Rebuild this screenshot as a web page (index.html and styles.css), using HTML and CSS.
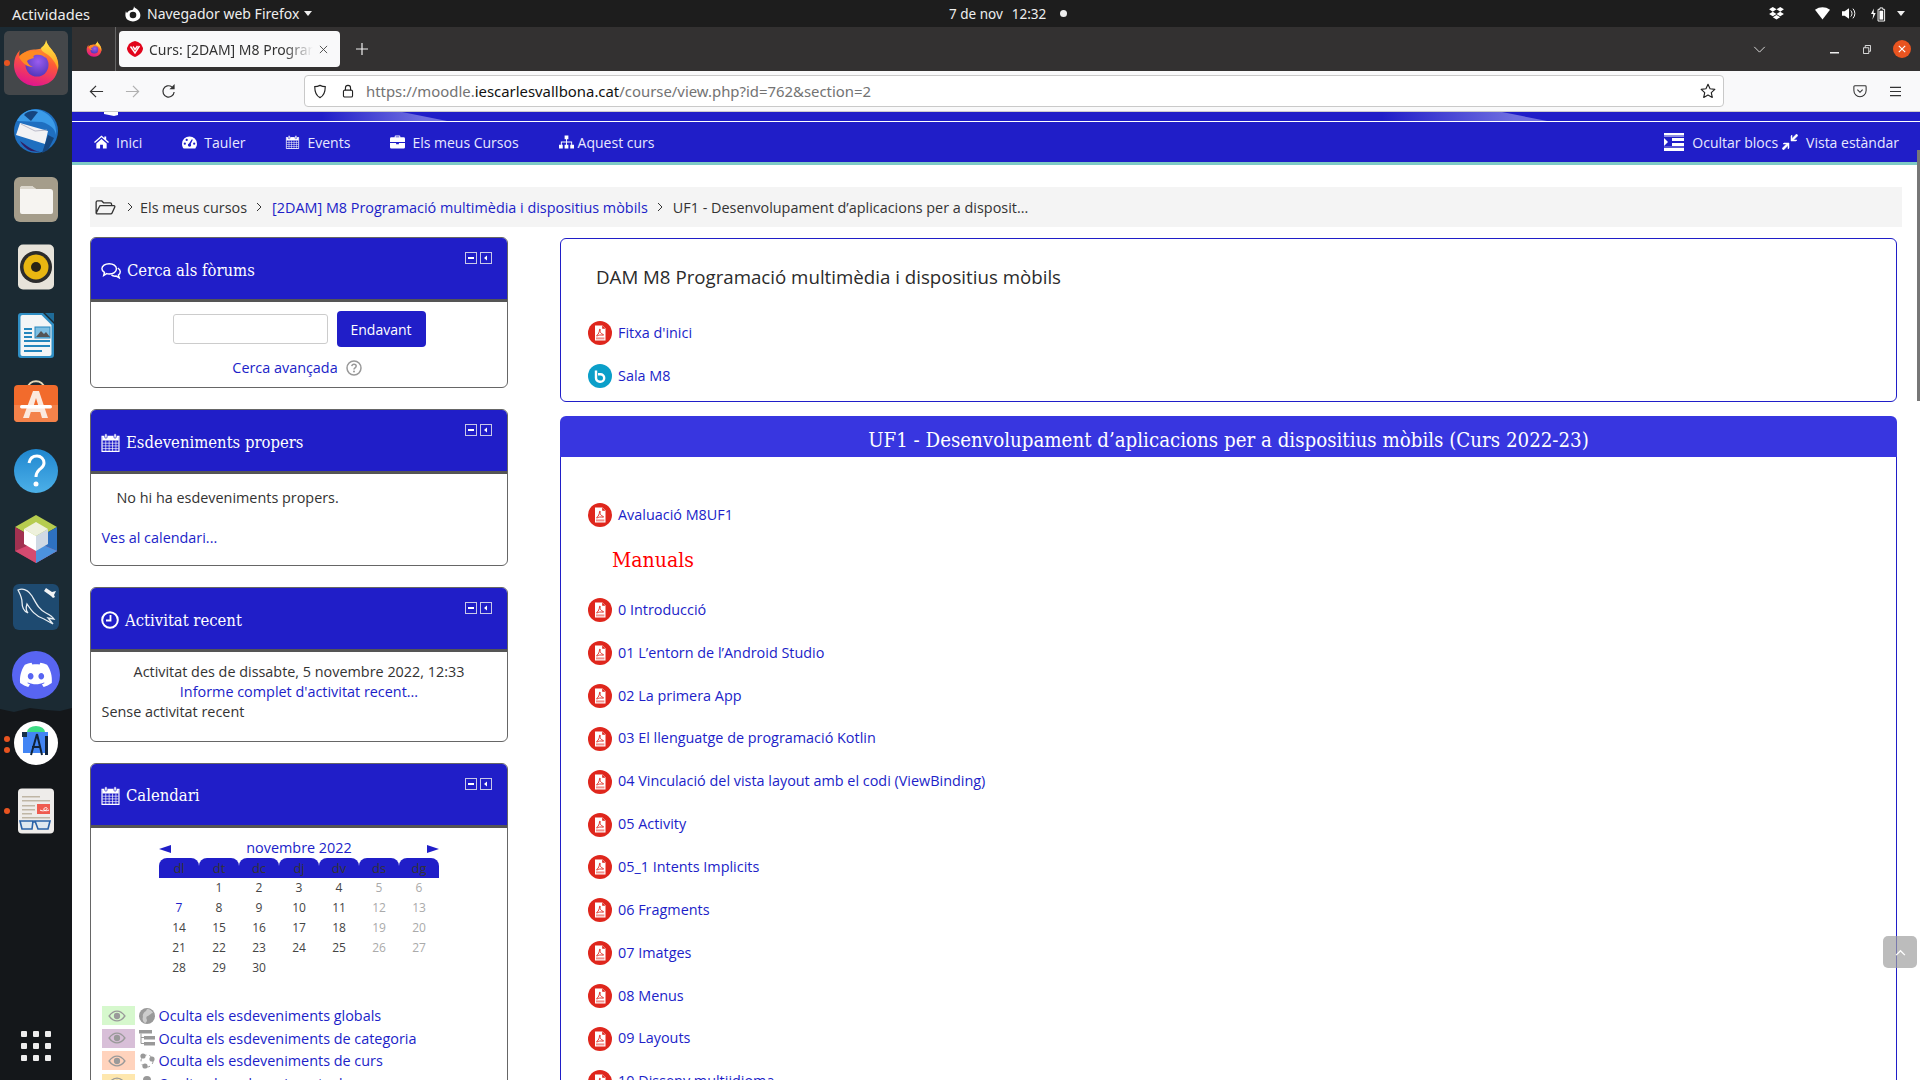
FILE: index.html
```html
<!DOCTYPE html>
<html lang="ca">
<head>
<meta charset="utf-8">
<title>Curs: [2DAM] M8 Programació</title>
<link rel="stylesheet" href="styles.css">
</head>
<body>
<svg class="defs" aria-hidden="true">
  <defs>
    <linearGradient id="ffBody" x1="0.7" y1="0" x2="0.4" y2="1"><stop offset="0" stop-color="#ffb52b"/><stop offset="0.45" stop-color="#ff5a36"/><stop offset="1" stop-color="#e0148f"/></linearGradient>
    <linearGradient id="ffFlame" x1="0.5" y1="0" x2="0.5" y2="1"><stop offset="0" stop-color="#ffe84a"/><stop offset="1" stop-color="#ff9a1f"/></linearGradient>
    <radialGradient id="ffGlobe" cx="0.55" cy="0.35" r="0.7"><stop offset="0" stop-color="#9a5cf0"/><stop offset="1" stop-color="#4f35b8"/></radialGradient>
    <symbol id="i-ff" viewBox="0 0 48 48">
      <path d="M34 1c1 5 5 8 9 14 4 7 4 15 1 21-3 7-11 11-20 11C12 47 2 38 2 26 2 20 4 15 8 11c-1 3-1 5 0 7 2-4 6-6 10-7 5-1 11 0 13-3 2-2 3-5 3-7z" fill="url(#ffBody)"/>
      <path d="M34 1c1 5 5 8 9 14 3 5 4 11 3 16-2-7-6-13-13-17-2-1-4-3-4-5 2-2 5-4 5-8z" fill="url(#ffFlame)"/>
      <circle cx="25" cy="26" r="11.5" fill="url(#ffGlobe)"/>
      <path d="M7 18c3-5 9-6 15-6 5 0 10 3 12 7-3-3-7-4-11-3-2 1-2 2-1 3-3 1-5 1-7 3 1 3 3 5 6 6-6 0-11-4-14-10z" fill="#ff8a22"/>
    </symbol>
    <symbol id="i-pdf" viewBox="0 0 24 24">
      <circle cx="12" cy="12" r="12" fill="#df261c"/>
      <path d="M7 4.500h7.500L17.500 7.500V19.500H7z" fill="#fff"/>
      <path d="M14.200 4.500v3.300h3.300z" fill="#df261c"/>
      <path d="M8.800 14.400c1.700-1.100 2.600-3.400 2.700-5.600 0-1.400 1-.9.600.4-.3 1.700.9 3.600 2.900 4.200 1 .3.700 1-.3.800-2.200-.5-4.300-.1-5.500.7-.6.300-.9 0-.4-.5z" fill="none" stroke="#df261c" stroke-width="0.900"/>
      <rect x="8" y="16.400" width="8.400" height="2" fill="#f1928c"/>
    </symbol>
    <symbol id="i-bbb" viewBox="0 0 24 24">
      <circle cx="12" cy="12" r="12" fill="#0b9fc9"/>
      <path d="M8 6.500v7.500a3.800 3.800 0 0 0 3.800 3.800h.6a3.800 3.800 0 0 0 0-7.600H10" fill="none" stroke="#fff" stroke-width="2.400"/>
    </symbol>
    <symbol id="i-cal" viewBox="0 0 28 28">
      <path d="M1.500 5h25v22h-25z" fill="none" stroke="#fff" stroke-width="1.700"/>
      <path d="M2 5h24v6H2z" fill="#fff"/>
      <path d="M2 15h24M2 19h24M2 23h24M7 11v16M12 11v16M17 11v16M22 11v16" stroke="#fff" stroke-width="1"/>
      <rect x="5.500" y="1" width="3.500" height="6.500" rx="1.500" fill="#fff" stroke="#201ec8"/>
      <rect x="19" y="1" width="3.500" height="6.500" rx="1.500" fill="#fff" stroke="#201ec8"/>
    </symbol>
    <symbol id="i-eye" viewBox="0 0 24 16">
      <path d="M1.500 8C5 3 8.500 1.500 12 1.500S19 3 22.500 8C19 13 15.500 14.500 12 14.500S5 13 1.500 8z" fill="none" stroke="#9a9a9a" stroke-width="1.800"/>
      <circle cx="12" cy="8" r="4.200" fill="#9a9a9a"/>
    </symbol>
    <symbol id="i-min" viewBox="0 0 12 12"><rect x=".5" y=".5" width="11" height="11" fill="none" stroke="#c8c8e8"/><rect x="3" y="5" width="6" height="2" fill="#fff"/></symbol>
    <symbol id="i-dock" viewBox="0 0 12 12"><rect x=".5" y=".5" width="11" height="11" fill="none" stroke="#c8c8e8"/><path d="M7 3.500 4 6l3 2.500z" fill="#fff"/></symbol>
  </defs>
</svg>

<header class="topbar">
  <div class="top-left">
    <span class="activities">Actividades</span>
    <svg class="app-glyph" viewBox="0 0 16 16"><path d="M9 0c0 2 2 2 4 4 3 3 3 7 1 9-3 3-8 3-11 1C0 12 0 8 1 5c0 1 1 2 1 2 1-2 3-3 5-3 1 0 2-2 2-4z" fill="#fff"/><circle cx="8" cy="9" r="3.300" fill="#1d1d1d"/></svg>
    <span>Navegador web Firefox</span>
    <span class="caret"></span>
  </div>
  <div class="clock"><span>7 de nov</span><span>12:32</span><span class="clock-dot"></span></div>
  <div class="tray">
    <svg class="tray-drop" viewBox="0 0 16 14"><path d="M4 0 8 2.500 4 5 0 2.500zM12 0l4 2.500L12 5 8 2.500zM4 5l4 2.500L4 10 0 7.500zM12 5l4 2.500-4 2.500-4-2.500zM4 11l4-2.500 4 2.500-4 2.500z" fill="#fff"/></svg>
    <svg class="tray-wifi" viewBox="0 0 16 13"><path d="M0 2.500C5-1 11-1 16 2.500L8 13z" fill="#fff"/></svg>
    <svg class="tray-vol" viewBox="0 0 16 14"><path d="M0 4.500h3L8 1v12L3 9.500H0z" fill="#fff"/><path d="M10 3.500a5 5 0 0 1 0 7M12.500 1.500a8 8 0 0 1 0 11" fill="none" stroke="#fff" stroke-width="1.100"/></svg>
    <svg class="tray-bat" viewBox="0 0 16 16"><path d="M3 2 0 8h2.500L1.500 14 5 7H2.800z" fill="#fff"/><path d="M9.500 1.500h3V3h2v12.500h-7V3h2z" fill="none" stroke="#fff"/><rect x="9" y="4.500" width="4" height="9.500" fill="#fff"/></svg>
    <span class="caret tray-caret"></span>
  </div>
</header>

<div class="desktop">
  <nav class="dock">
    <svg class="dock-wave" viewBox="0 0 72 6" preserveAspectRatio="none"><path d="M0 0h72v1L60 4 46 3 30 1 14 5 0 2z" fill="#1b2a33"/></svg>
    <div class="dock-item is-active">
      <span class="run-dot"></span>
      <svg class="dock-icon" viewBox="0 0 48 48"><use href="#i-ff"/></svg>
    </div>
    <div class="dock-item">
      <svg class="dock-icon" viewBox="0 0 48 48">
        <circle cx="24" cy="24" r="22" fill="#1f6fc0"/>
        <path d="M5 14C9 5 20 0 30 4c9 4 15 12 14 24-1-7-7-11-14-13z" fill="#3b9be8"/>
        <path d="M12 8c3-4 9-5 14-3l-7 9z" fill="#15457f"/>
        <path d="M8 16 36 24l-3 13L4 28z" fill="#f2f2f4"/>
        <path d="M9 17l14 7 12-1" fill="none" stroke="#aab" stroke-width=".8"/>
        <path d="M8 34c7 5 12 9 20 11l-9-1C14 42 10 38 8 34z" fill="#311f63"/>
        <path d="M36 28l6 3-6 12-6 3z" fill="#15457f"/>
      </svg>
    </div>
    <div class="dock-item">
      <svg class="dock-icon" viewBox="0 0 48 48">
        <rect x="2" y="2" width="44" height="45" rx="6" fill="#a59d8b"/>
        <path d="M8 14a3 3 0 0 1 3-3h9l4 3h14a3 3 0 0 1 3 3v20a2 2 0 0 1-2 2H10a2 2 0 0 1-2-2z" fill="#f6f4f1"/>
        <path d="M8 14a3 3 0 0 1 3-3h9l4 3z" fill="#dcd7cd"/>
      </svg>
    </div>
    <div class="dock-item">
      <svg class="dock-icon" viewBox="0 0 48 48">
        <rect x="6" y="1.500" width="36" height="45" rx="5" fill="#e7e3da"/>
        <circle cx="24" cy="24" r="16" fill="#2c2c2c"/>
        <circle cx="24" cy="24" r="12.500" fill="#e9b611"/>
        <circle cx="24" cy="24" r="5" fill="#2b2415"/>
      </svg>
    </div>
    <div class="dock-item">
      <svg class="dock-icon" viewBox="0 0 48 48">
        <path d="M6 5a3 3 0 0 1 3-3h22l11 11v31a3 3 0 0 1-3 3H9a3 3 0 0 1-3-3z" fill="#2f8ec4"/>
        <path d="M8.500 6a2 2 0 0 1 2-2h19l10 10v29a2 2 0 0 1-2 2h-27a2 2 0 0 1-2-2z" fill="#f3f5f6"/>
        <path d="M33 2h9v9z" fill="#1f6b98"/>
        <path d="M12 17h8v2h-8zM12 21h8v2h-8zM12 25h8v2h-8zM12 29h26v2H12zM12 34h26v2H12zM12 39h18v2H12z" fill="#2486bd"/>
        <rect x="23" y="16" width="15" height="11" fill="#7fbfe2" stroke="#2486bd"/>
        <path d="M24 26l5-6 3 3 2-2 4 5z" fill="#555"/>
      </svg>
    </div>
    <div class="dock-item">
      <svg class="dock-icon" viewBox="0 0 48 48">
        <path d="M16 9c0-9 16-9 16 0" fill="none" stroke="#e4d8b8" stroke-width="2"/>
        <rect x="2" y="6" width="44" height="37" rx="4" fill="#f26b2c"/>
        <path d="M2 26h44v13a4 4 0 0 1-4 4H6a4 4 0 0 1-4-4z" fill="#f4824a"/>
        <path d="M21 12h6l9 27h-6l-1.800-6H18.800L17 39h-6zM24 19l-3 10h6z" fill="#fbe9de"/>
        <rect x="8" y="26" width="32" height="3.500" rx="1.700" fill="#fff"/>
      </svg>
    </div>
    <div class="dock-item">
      <svg class="dock-icon" viewBox="0 0 48 48">
        <defs><linearGradient id="helpG" x1="0" y1="0" x2="0" y2="1"><stop offset="0" stop-color="#1f86cf"/><stop offset="1" stop-color="#4cb0e8"/></linearGradient></defs>
        <circle cx="24" cy="24" r="22" fill="url(#helpG)"/>
        <path d="M17 16c1-5 4-7 8-7 4 0 7 3 7 7s-3 5-5 7-3 3-3 7" fill="none" stroke="#fff" stroke-width="3"/>
        <circle cx="24" cy="37" r="2.500" fill="#fff"/>
      </svg>
    </div>
    <div class="dock-item">
      <svg class="dock-icon" viewBox="0 0 48 48">
        <path d="M24 0 45 12 24 24 3 12z" fill="#b6cc4f"/>
        <path d="M3 12 24 24v24L3 36z" fill="#a23150"/>
        <path d="M45 12 24 24v24l21-12z" fill="#2e71c0"/>
        <path d="M3 36l21-9 21 9-21 12z" fill="#d54a70"/>
        <path d="M24 27l21 9-21 12z" fill="#4c92de"/>
        <path d="M24 7 36 14 24 21 12 14z" fill="#eef1dc"/>
        <path d="M12 14l12 7v15l-12-7z" fill="#fff"/>
        <path d="M36 14l-12 7v15l12-7z" fill="#cfd9e4"/>
      </svg>
    </div>
    <div class="dock-item">
      <svg class="dock-icon" viewBox="0 0 48 48">
        <rect x="1" y="1" width="46" height="46" rx="6" fill="#1e4a70"/>
        <path d="M6 7c5-2 10 0 14 6 4 7 7 14 14 17 4 2 6 3 8 6l-6-1 5 6-9-5c-9-3-13-9-17-15-1 3-2 6 1 9-5-2-6-7-6-11 0-5-2-8-4-12z" fill="none" stroke="#e8eef2" stroke-width="1.300"/>
        <path d="M34 5l6 4 4-1-2 4 1 2-2 1-2-2-7-5z" fill="#f2f4f6"/>
      </svg>
    </div>
    <div class="dock-item">
      <svg class="dock-icon" viewBox="0 0 48 48">
        <circle cx="24" cy="24" r="24" fill="#5865f2"/>
        <g transform="translate(8 8) scale(1.330)"><path fill="#fff" d="M20.317 4.3698a19.7913 19.7913 0 00-4.8851-1.5152.0741.0741 0 00-.0785.0371c-.211.3753-.4447.8648-.6083 1.2495-1.8447-.2762-3.68-.2762-5.4868 0-.1636-.3933-.4058-.8742-.6177-1.2495a.077.077 0 00-.0785-.037 19.7363 19.7363 0 00-4.8852 1.515.0699.0699 0 00-.0321.0277C.5334 9.0458-.319 13.5799.0992 18.0578a.0824.0824 0 00.0312.0561c2.0528 1.5076 4.0413 2.4228 5.9929 3.0294a.0777.0777 0 00.0842-.0276c.4616-.6304.8731-1.2952 1.226-1.9942a.076.076 0 00-.0416-.1057c-.6528-.2476-1.2743-.5495-1.8722-.8923a.077.077 0 01-.0076-.1277c.1258-.0943.2517-.1923.3718-.2914a.0743.0743 0 01.0776-.0105c3.9278 1.7933 8.18 1.7933 12.0614 0a.0739.0739 0 01.0785.0095c.1202.099.246.1981.3728.2924a.077.077 0 01-.0066.1276 12.2986 12.2986 0 01-1.873.8914.0766.0766 0 00-.0407.1067c.3604.698.7719 1.3628 1.225 1.9932a.076.076 0 00.0842.0286c1.961-.6067 3.9495-1.5219 6.0023-3.0294a.077.077 0 00.0313-.0552c.5004-5.177-.8382-9.6739-3.5485-13.6604a.061.061 0 00-.0312-.0286zM8.02 15.3312c-1.1825 0-2.1569-1.0857-2.1569-2.419 0-1.3332.9555-2.4189 2.157-2.4189 1.2108 0 2.1757 1.0952 2.1568 2.419 0 1.3332-.9555 2.4189-2.1569 2.4189zm7.9748 0c-1.1825 0-2.1569-1.0857-2.1569-2.419 0-1.3332.9554-2.4189 2.1569-2.4189 1.2108 0 2.1757 1.0952 2.1568 2.419 0 1.3332-.946 2.4189-2.1568 2.4189Z"/></g>
      </svg>
    </div>
    <div class="dock-item">
      <span class="run-dot run-dot-a"></span><span class="run-dot run-dot-b"></span>
      <svg class="dock-icon" viewBox="0 0 48 48">
        <circle cx="24" cy="24" r="22" fill="#fff"/>
        <path d="M15 13a9 6 0 0 1 18 0z" fill="#3ddc84"/>
        <path d="M11 13h25v21H11z" fill="#4285f4"/>
        <rect x="10" y="13" width="5" height="5" fill="#16304a"/>
        <path d="M25 15l-6 21M25 15l5 21M20 28h9" stroke="#10233a" stroke-width="2" fill="none"/>
        <rect x="33" y="17" width="3" height="19" fill="#10233a"/>
      </svg>
    </div>
    <div class="dock-item">
      <span class="run-dot"></span>
      <svg class="dock-icon" viewBox="0 0 48 48">
        <rect x="6" y="1.500" width="36" height="45" rx="4" fill="#eeecea"/>
        <path d="M10 9h18v1.500H10zM10 13h28v1.500H10zM10 18h13v1.500H10zM10 22h13v1.500H10zM10 26h10v1.500H10zM10 30h28v1.500H10z" fill="#bfb6a5"/>
        <rect x="25" y="17" width="13" height="10" fill="#ef5b4f"/>
        <path d="M28 23c3 2 8 0 7-2-1-1-4 0-3 2 1 1 3 1 5 0" fill="none" stroke="#fff"/>
        <path d="M8 34h13l-1 8h-10zM23 34h15l-2 8h-10zM21 35h2" fill="#dfe8f0" stroke="#2a62a8" stroke-width="1.600"/>
      </svg>
    </div>
    <div class="app-grid">
      <i></i><i></i><i></i><i></i><i></i><i></i><i></i><i></i><i></i>
    </div>
  </nav>

  <div class="window">
    <div class="tabbar">
      <div class="tab-pinned"><svg class="pinned-ff" viewBox="0 0 48 48"><use href="#i-ff"/></svg></div>
      <div class="tab">
        <svg class="tab-fav" viewBox="0 0 16 16"><path d="M8 0l3 1 3 2 2 4c0 4-3 7-8 9-5-2-8-5-8-9l2-4 3-2z" fill="#e2051c"/><path d="M3.500 5.500 8 12l4.500-7M6 5.500 8 8.500l2.500-3.500" fill="none" stroke="#fff" stroke-width="1.400"/></svg>
        <span class="tab-title">Curs: [2DAM] M8 Programació</span>
        <svg class="tab-x" viewBox="0 0 10 10"><path d="M1 1l8 8M9 1 1 9" stroke="#444" stroke-width="1"/></svg>
      </div>
      <svg class="tab-plus" viewBox="0 0 12 12"><path d="M6 0v12M0 6h12" stroke="#f0f0f0" stroke-width="1.200"/></svg>
      <div class="win-controls">
        <svg class="win-chevron" viewBox="0 0 14 8"><path d="M1 1l6 6 6-6" fill="none" stroke="#eee" stroke-width="1"/></svg>
        <svg class="win-min" viewBox="0 0 9 2"><rect width="9" height="1.500" fill="#eee"/></svg>
        <svg class="win-max" viewBox="0 0 9 10"><path d="M.5 3h6v6.500h-6zM2.500 2.800V.5h6v6.500H6.800" fill="none" stroke="#eee"/></svg>
        <span class="win-close"><svg viewBox="0 0 10 10"><path d="M1 1l8 8M9 1 1 9" stroke="#fff" stroke-width="1.400"/></svg></span>
      </div>
    </div>

    <div class="toolbar">
      <svg class="tb-icon" viewBox="0 0 16 16"><path d="M15 8H1.500M7.500 2 1.500 8l6 6" fill="none" stroke="#333" stroke-width="1.300"/></svg>
      <svg class="tb-icon tb-forward" viewBox="0 0 16 16"><path d="M1 8h13.500M8.500 2l6 6-6 6" fill="none" stroke="#b0b0b0" stroke-width="1.300"/></svg>
      <svg class="tb-icon tb-reload" viewBox="0 0 16 16"><path d="M14 8.500A6 6 0 1 1 11.500 3" fill="none" stroke="#333" stroke-width="1.300"/><path d="M14.500 0v5.500H9z" fill="#333"/></svg>
      <div class="urlbar">
        <svg class="url-shield" viewBox="0 0 16 16"><path d="M8 1c2 1 4 1.500 6 1.500 0 6-1 10-6 12.500-5-2.500-6-6.500-6-12.500C4 2.500 6 2 8 1z" fill="none" stroke="#222" stroke-width="1.300"/></svg>
        <svg class="url-lock" viewBox="0 0 14 16"><path d="M4 7V4.500a3 3 0 0 1 6 0V7" fill="none" stroke="#222" stroke-width="1.300"/><rect x="1.700" y="7" width="10.600" height="8" rx="1.500" fill="none" stroke="#222" stroke-width="1.300"/></svg>
        <span class="url-text">https://moodle.<b>iescarlesvallbona.cat</b>/course/view.php?id=762&amp;section=2</span>
        <svg class="url-star" viewBox="0 0 18 18"><path d="M9 1.500l2.300 5 5.400.6-4 3.700 1.100 5.400L9 13.500l-4.800 2.700 1.100-5.400-4-3.700 5.400-.6z" fill="none" stroke="#222" stroke-width="1.300" stroke-linejoin="round"/></svg>
      </div>
      <svg class="tb-pocket" viewBox="0 0 16 16"><path d="M2 2h12a1 1 0 0 1 1 1v4.500a7 7 0 0 1-14 0V3a1 1 0 0 1 1-1z" fill="none" stroke="#333" stroke-width="1.200"/><path d="M5 6.500 8 9.500l3-3" fill="none" stroke="#333" stroke-width="1.300"/></svg>
      <svg class="tb-menu" viewBox="0 0 14 12"><path d="M1 1.500h12M1 6h12M1 10.500h12" stroke="#333" stroke-width="1.200"/></svg>
    </div>

    <main class="page">
      <div class="site-strip">
        <svg class="strip-art" viewBox="0 0 1848 9" preserveAspectRatio="none">
          <defs>
            <linearGradient id="stripA" x1="0" y1="0" x2="1" y2="0"><stop offset="0" stop-color="#201ec8"/><stop offset="0.8" stop-color="#6f6ee0"/><stop offset="1" stop-color="#6f6ee0"/></linearGradient>
          </defs>
          <path d="M1310 0h120l45 9h-165z" fill="url(#stripA)"/>
          <path d="M250 0h80l45 9h-125z" fill="url(#stripA)"/>
          <path d="M32 0h14v3l-4 1-10-2z" fill="#fff"/>
        </svg>
      </div>
      <div class="site-nav">
        <a class="nav-item"><svg class="nav-icon" viewBox="0 0 16 14"><path d="M8 0 0 7l1 1 7-6 7 6 1-1-3-2.600V1h-2v1.700zM2.500 8.500V14h4v-4h3v4h4V8.500L8 3.800z" fill="#fff"/></svg>Inici</a>
        <a class="nav-item"><svg class="nav-icon" viewBox="0 0 16 14"><path d="M8 1a8 8 0 0 0-8 8c0 2 .7 3.700 1.800 5h12.400A8 8 0 0 0 16 9a8 8 0 0 0-8-8zM3 10a1.200 1.200 0 1 1 0-2.400A1.200 1.200 0 0 1 3 10zm2-4a1.200 1.200 0 1 1 0-2.400A1.200 1.200 0 0 1 5 6zm3 6a1.800 1.800 0 0 1-.5-3.500L10.500 4l1 .5L9.300 9A1.800 1.800 0 0 1 8 12zm5-2a1.200 1.200 0 1 1 0-2.400 1.200 1.200 0 0 1 0 2.400z" fill="#fff"/></svg>Tauler</a>
        <a class="nav-item"><svg class="nav-icon" viewBox="0 0 28 28"><use href="#i-cal"/></svg>Events</a>
        <a class="nav-item"><svg class="nav-icon" viewBox="0 0 16 14"><path d="M5 2V1a1 1 0 0 1 1-1h4a1 1 0 0 1 1 1v1h3.500A1.500 1.500 0 0 1 16 3.500V7H0V3.500A1.500 1.500 0 0 1 1.500 2zm1 0h4V1H6zM0 8h6.500v1.500h3V8H16v4.500a1.500 1.500 0 0 1-1.500 1.500h-13A1.500 1.500 0 0 1 0 12.500z" fill="#fff"/></svg>Els meus Cursos</a>
        <a class="nav-item nav-narrow"><svg class="nav-icon" viewBox="0 0 16 14"><path d="M6 0h4v4H8.500v2.500H14V10h2v4h-4v-4h1V7.500H8.500V10H10v4H6v-4h1.500V7.500H3V10h1v4H0v-4h2V6.500h5.500V4H6z" fill="#fff"/></svg>Aquest curs</a>
        <div class="nav-right">
          <a class="nav-item nav-blocks"><svg class="nav-icon-lg" viewBox="0 0 20 18"><path d="M0 0h20v2.500H0zM0 15h20v3H0zM8 5h12v3H8zM8 10h12v3H8zM0 5l4 4-4 4z" fill="#fff"/><path d="M0 3.500h20M0 14h20" stroke="#fff" stroke-width=".5"/></svg>Ocultar blocs</a>
          <a class="nav-item nav-view"><svg class="nav-icon" viewBox="0 0 16 16"><path d="M16 1.500 11.500 6H15l-1 1H9V2l1-1v3.500L14.500 0zM0 14.500 4.500 10H1l1-1h5v5l-1 1v-3.500L1.500 16z" fill="#fff" stroke="#fff" stroke-width=".5"/></svg>Vista estàndar</a>
        </div>
      </div>
      <div class="nav-rule"></div>

      <div class="content">
        <div class="breadcrumb">
          <svg class="crumb-home" viewBox="0 0 22 16"><path d="M1 14V2.500A1.500 1.500 0 0 1 2.500 1H7l2 2h7a1.500 1.500 0 0 1 1.500 1.500V6M1 14l3.500-7a1.500 1.500 0 0 1 1.400-1H20a1 1 0 0 1 .9 1.400L18 13.800a1.500 1.500 0 0 1-1.400 1H2a1 1 0 0 1-1-.8z" fill="none" stroke="#333" stroke-width="1.400"/></svg>
          <svg class="crumb-sep" viewBox="0 0 6 10"><path d="M1 1l4 4-4 4" fill="none" stroke="#333"/></svg>
          <span>Els meus cursos</span>
          <svg class="crumb-sep" viewBox="0 0 6 10"><path d="M1 1l4 4-4 4" fill="none" stroke="#333"/></svg>
          <a class="link">[2DAM] M8 Programació multimèdia i dispositius mòbils</a>
          <svg class="crumb-sep" viewBox="0 0 6 10"><path d="M1 1l4 4-4 4" fill="none" stroke="#333"/></svg>
          <span>UF1 - Desenvolupament d’aplicacions per a disposit...</span>
        </div>

        <div class="columns">
          <aside class="side">
            <section class="block">
              <div class="block-head">
                <svg class="head-icon" viewBox="0 0 22 18"><path d="M9 1.500c4.500 0 8 2.500 8 5.700s-3.500 5.700-8 5.700c-1 0-2-.1-2.800-.4L3 14.500l.8-3.300C2.100 10.200 1 8.800 1 7.200 1 4 4.500 1.500 9 1.500z" fill="none" stroke="#fff" stroke-width="1.600"/><path d="M18.500 6.500c1.700 1 2.700 2.400 2.700 4 0 1.400-.8 2.600-2.100 3.500l.9 3-3.300-1.900c-1.800.3-3.800 0-5.200-.9" fill="none" stroke="#fff" stroke-width="1.600"/></svg>
                <h2 class="block-title">Cerca als fòrums</h2>
                <div class="block-ctrl"><svg viewBox="0 0 12 12"><use href="#i-min"/></svg><svg viewBox="0 0 12 12"><use href="#i-dock"/></svg></div>
              </div>
              <div class="block-body search-body">
                <div class="search-form"><span class="search-input"></span><span class="search-btn">Endavant</span></div>
                <div class="search-adv"><a class="link">Cerca avançada</a><svg class="help-icon" viewBox="0 0 16 16"><circle cx="8" cy="8" r="7" fill="none" stroke="#999" stroke-width="1.500"/><path d="M5.800 6.200C6 4.800 7 4.200 8 4.200c1.300 0 2.200.8 2.200 1.900 0 1.700-2.200 1.700-2.200 3.300" fill="none" stroke="#999" stroke-width="1.500"/><circle cx="8" cy="11.500" r="1" fill="#999"/></svg></div>
              </div>
            </section>

            <section class="block">
              <div class="block-head">
                <svg class="head-icon cal-head" viewBox="0 0 28 28"><use href="#i-cal"/></svg>
                <h2 class="block-title">Esdeveniments propers</h2>
                <div class="block-ctrl"><svg viewBox="0 0 12 12"><use href="#i-min"/></svg><svg viewBox="0 0 12 12"><use href="#i-dock"/></svg></div>
              </div>
              <div class="block-body events-body">
                <p class="events-none">No hi ha esdeveniments propers.</p>
                <a class="link">Ves al calendari...</a>
              </div>
            </section>

            <section class="block">
              <div class="block-head">
                <svg class="head-icon clock-head" viewBox="0 0 18 18"><circle cx="9" cy="9" r="7.800" fill="none" stroke="#fff" stroke-width="2"/><path d="M9.500 4v5.500H5" fill="none" stroke="#fff" stroke-width="1.800"/></svg>
                <h2 class="block-title">Activitat recent</h2>
                <div class="block-ctrl"><svg viewBox="0 0 12 12"><use href="#i-min"/></svg><svg viewBox="0 0 12 12"><use href="#i-dock"/></svg></div>
              </div>
              <div class="block-body recent-body">
                <div class="centered">Activitat des de dissabte, 5 novembre 2022, 12:33</div>
                <div class="centered"><a class="link">Informe complet d'activitat recent...</a></div>
                <div>Sense activitat recent</div>
              </div>
            </section>

            <section class="block">
              <div class="block-head">
                <svg class="head-icon cal-head" viewBox="0 0 28 28"><use href="#i-cal"/></svg>
                <h2 class="block-title">Calendari</h2>
                <div class="block-ctrl"><svg viewBox="0 0 12 12"><use href="#i-min"/></svg><svg viewBox="0 0 12 12"><use href="#i-dock"/></svg></div>
              </div>
              <div class="block-body cal-body">
                <div class="cal-title">
                  <svg class="cal-arrow" viewBox="0 0 12 8"><path d="M0 4l12-4v8z" fill="#201ec8"/></svg>
                  <a class="link">novembre 2022</a>
                  <svg class="cal-arrow" viewBox="0 0 12 8"><path d="M12 4 0 0v8z" fill="#201ec8"/></svg>
                </div>
                <div class="cal-grid">
                  <span class="dow">dl</span><span class="dow">dt</span><span class="dow">dc</span><span class="dow">dj</span><span class="dow">dv</span><span class="dow">ds</span><span class="dow">dg</span>
                  <span></span><span>1</span><span>2</span><span>3</span><span>4</span><span class="we">5</span><span class="we">6</span>
                  <span class="link">7</span><span>8</span><span>9</span><span>10</span><span>11</span><span class="we">12</span><span class="we">13</span>
                  <span>14</span><span>15</span><span>16</span><span>17</span><span>18</span><span class="we">19</span><span class="we">20</span>
                  <span>21</span><span>22</span><span>23</span><span>24</span><span>25</span><span class="we">26</span><span class="we">27</span>
                  <span>28</span><span>29</span><span>30</span>
                </div>
                <ul class="legend">
                  <li><span class="swatch sw-global"><svg viewBox="0 0 24 16"><use href="#i-eye"/></svg></span>
                    <svg class="legend-icon" viewBox="0 0 16 16"><circle cx="8" cy="8" r="8" fill="#999"/><path d="M8 1c3 0 5 2 6 4-2 0-3 2-5 3-2 0-2 3-1 4 0 1-1 3-2 3-2-1-3-4-2-6C3 7 5 4 7 3z" fill="#fff" opacity=".5"/></svg>
                    <a class="link">Oculta els esdeveniments globals</a></li>
                  <li><span class="swatch sw-cat"><svg viewBox="0 0 24 16"><use href="#i-eye"/></svg></span>
                    <svg class="legend-icon" viewBox="0 0 16 16"><path d="M0 0h13v3.500H0zM5 6h11v3.500H5zM5 12h11v3.500H5z" fill="#999"/><path d="M2 3.500v10h3M2 7.500h3" fill="none" stroke="#999"/></svg>
                    <a class="link">Oculta els esdeveniments de categoria</a></li>
                  <li><span class="swatch sw-course"><svg viewBox="0 0 24 16"><use href="#i-eye"/></svg></span>
                    <svg class="legend-icon" viewBox="0 0 16 16"><circle cx="4" cy="3" r="2.600" fill="#999"/><circle cx="13" cy="6" r="2.600" fill="#999"/><circle cx="6" cy="13" r="2.600" fill="#999"/><circle cx="8" cy="8" r="6" fill="none" stroke="#999" stroke-dasharray="3 3"/></svg>
                    <a class="link">Oculta els esdeveniments de curs</a></li>
                  <li><span class="swatch sw-group"><svg viewBox="0 0 24 16"><use href="#i-eye"/></svg></span>
                    <svg class="legend-icon" viewBox="0 0 16 16"><circle cx="8" cy="5" r="4" fill="#999"/><path d="M1 16c0-5 3-6 7-6s7 1 7 6z" fill="#999"/></svg>
                    <a class="link">Oculta els esdeveniments de grup</a></li>
                </ul>
              </div>
            </section>
          </aside>

          <div class="main-col">
            <section class="intro-box">
              <h3 class="intro-title">DAM M8 Programació multimèdia i dispositius mòbils</h3>
              <a class="res"><svg class="res-icon" viewBox="0 0 24 24"><use href="#i-pdf"/></svg>Fitxa d'inici</a>
              <a class="res"><svg class="res-icon" viewBox="0 0 24 24"><use href="#i-bbb"/></svg>Sala M8</a>
            </section>
            <section class="unit">
              <h3 class="unit-head">UF1 - Desenvolupament d’aplicacions per a dispositius mòbils (Curs 2022-23)</h3>
              <div class="unit-body">
                <a class="res"><svg class="res-icon" viewBox="0 0 24 24"><use href="#i-pdf"/></svg>Avaluació M8UF1</a>
                <h4 class="unit-sub">Manuals</h4>
                <a class="res"><svg class="res-icon" viewBox="0 0 24 24"><use href="#i-pdf"/></svg>0 Introducció</a>
                <a class="res"><svg class="res-icon" viewBox="0 0 24 24"><use href="#i-pdf"/></svg>01 L’entorn de l’Android Studio</a>
                <a class="res"><svg class="res-icon" viewBox="0 0 24 24"><use href="#i-pdf"/></svg>02 La primera App</a>
                <a class="res"><svg class="res-icon" viewBox="0 0 24 24"><use href="#i-pdf"/></svg>03 El llenguatge de programació Kotlin</a>
                <a class="res"><svg class="res-icon" viewBox="0 0 24 24"><use href="#i-pdf"/></svg>04 Vinculació del vista layout amb el codi (ViewBinding)</a>
                <a class="res"><svg class="res-icon" viewBox="0 0 24 24"><use href="#i-pdf"/></svg>05 Activity</a>
                <a class="res"><svg class="res-icon" viewBox="0 0 24 24"><use href="#i-pdf"/></svg>05_1 Intents Implicits</a>
                <a class="res"><svg class="res-icon" viewBox="0 0 24 24"><use href="#i-pdf"/></svg>06 Fragments</a>
                <a class="res"><svg class="res-icon" viewBox="0 0 24 24"><use href="#i-pdf"/></svg>07 Imatges</a>
                <a class="res"><svg class="res-icon" viewBox="0 0 24 24"><use href="#i-pdf"/></svg>08 Menus</a>
                <a class="res"><svg class="res-icon" viewBox="0 0 24 24"><use href="#i-pdf"/></svg>09 Layouts</a>
                <a class="res"><svg class="res-icon" viewBox="0 0 24 24"><use href="#i-pdf"/></svg>10 Disseny multiidioma</a>
              </div>
            </section>
          </div>
        </div>
      </div>
      <span class="scroll-thumb"></span>
      <span class="to-top"><svg viewBox="0 0 12 8"><path d="M1 7l5-5 5 5" fill="none" stroke="#fff" stroke-width="1.500"/></svg></span>
    </main>
  </div>
</div>
</body>
</html>
```
FILE: styles.css
```css
* { box-sizing: border-box; }
html, body { margin: 0; padding: 0; }
body {
  width: 1920px; height: 1080px; overflow: hidden;
  font-family: "Open Sans", "Noto Sans", sans-serif;
  font-size: 14.4px; color: #333; background: #fff;
  display: flex; flex-direction: column;
}
h2, h3, h4, p, ul { margin: 0; padding: 0; font-weight: normal; }
svg { display: block; flex: none; }
.defs { position: absolute; width: 0; height: 0; }
.link { color: #201ec8; text-decoration: none; }

/* top bar */
.topbar {
  height: 27px; flex: none; background: #1d1d1d; color: #eee;
  display: flex; align-items: center;
  font-family: "Noto Sans", sans-serif; font-size: 14px;
}
.top-left { width: 949px; display: flex; align-items: center; padding-left: 12px; }
.activities { width: 113px; font-size: 14.6px; }
.app-glyph { width: 16px; height: 16px; margin-right: 6px; }
.caret { width: 0; height: 0; border: 4.500px solid transparent; border-top: 5px solid #eee; border-bottom: 0; margin-left: 5px; }
.clock { display: flex; align-items: center; gap: 9px; font-size: 13.500px; }
.clock-dot { width: 7px; height: 7px; border-radius: 50%; background: #eee; margin-left: 5px; }
.tray { margin-left: auto; display: flex; align-items: center; padding-right: 15px; }
.tray-drop { width: 15px; height: 13px; }
.tray-wifi { width: 15px; height: 13px; margin-left: 31px; }
.tray-vol { width: 14px; height: 13px; margin-left: 12px; }
.tray-bat { width: 15px; height: 16px; margin-left: 15px; }
.tray-caret { margin-left: 11px; }

.desktop { flex: 1; display: flex; min-height: 0; }

/* dock */
.dock {
  width: 72px; flex: none; position: relative;
  background: linear-gradient(#1b2a33 0, #1b2a33 681px, #14171a 681px);
  display: flex; flex-direction: column; align-items: center;
  gap: 20px; padding-top: 12px; padding-bottom: 19px;
}
.dock-wave { position: absolute; left: 0; top: 680px; width: 72px; height: 6px; }
.dock-item { position: relative; width: 48px; height: 48px; flex: none; }
.dock-icon { width: 48px; height: 48px; position: relative; }
.is-active::before {
  content: ""; position: absolute; left: -8px; top: -8px; width: 64px; height: 64px;
  border-radius: 5px; background: #44474a;
}
.run-dot { position: absolute; left: -8px; top: 21px; width: 6px; height: 6px; border-radius: 50%; background: #e95420; z-index: 1; }
.run-dot-a { top: 17px; }
.run-dot-b { top: 28px; }
.app-grid { margin-top: auto; display: grid; grid-template-columns: repeat(3, 6px); gap: 6px; }
.app-grid i { width: 6px; height: 6px; background: #eee; border-radius: 1px; }

/* browser chrome */
.window { flex: 1; min-width: 0; display: flex; flex-direction: column; }
.tabbar { height: 44px; flex: none; background: #333131; display: flex; align-items: center; }
.tab-pinned { width: 44px; height: 44px; border-right: 1px solid #666; display: flex; align-items: center; justify-content: center; }
.pinned-ff { width: 16px; height: 16px; }
.tab {
  width: 221px; height: 36px; margin-left: 3px; background: #f9f9fa; border-radius: 4px;
  display: flex; align-items: center; padding-left: 8px; color: #333;
  font-family: "Noto Sans", sans-serif; font-size: 14px;
}
.tab-fav { width: 16px; height: 16px; margin-right: 6px; }
.tab-title {
  width: 169px; white-space: nowrap; overflow: hidden;
  -webkit-mask-image: linear-gradient(to right, #000 80%, transparent 97%);
  mask-image: linear-gradient(to right, #000 80%, transparent 97%);
}
.tab-x { width: 9px; height: 9px; margin-left: 1px; }
.tab-plus { width: 12px; height: 12px; margin-left: 16px; }
.win-controls { margin-left: auto; display: flex; align-items: center; }
.win-chevron { width: 13px; height: 7px; }
.win-min { width: 9px; height: 2px; margin-left: 64px; margin-top: 7px; }
.win-max { width: 8px; height: 9px; margin-left: 24px; }
.win-close { width: 18px; height: 18px; border-radius: 50%; background: #e95420; margin-left: 22px; margin-right: 9px; display: flex; align-items: center; justify-content: center; }
.win-close svg { width: 8px; height: 8px; }

.toolbar {
  height: 41px; flex: none; background: #f9f9fa; border-bottom: 1px solid #ccc;
  display: flex; align-items: center; padding-left: 17px;
}
.tb-icon { width: 15px; height: 15px; margin-right: 21px; }
.tb-reload { margin-right: 0; }
.urlbar {
  width: 1420px; height: 32px; margin-left: 128px; background: #fff;
  border: 1px solid #c9c9c9; border-radius: 4px;
  display: flex; align-items: center; padding-left: 8px;
  font-family: "Noto Sans", sans-serif; font-size: 14.900px; color: #737373;
}
.url-shield { width: 14px; height: 15px; }
.url-lock { width: 12px; height: 14px; margin-left: 15px; }
.url-text { margin-left: 12px; white-space: nowrap; }
.url-text b { font-weight: normal; color: #111; }
.url-star { width: 16px; height: 16px; margin-left: auto; margin-right: 7px; }
.tb-pocket { width: 14px; height: 14px; margin-left: 129px; }
.tb-menu { width: 13px; height: 11px; margin-left: 22px; }

/* page */
.page { flex: 1; min-height: 0; position: relative; overflow: hidden; }
.site-strip { height: 9px; background: #201ec8; }
.strip-art { width: 100%; height: 9px; }
.site-nav {
  height: 41px; background: #201ec8; border-top: 1px solid #fff;
  display: flex; align-items: center; padding: 0 21px 0 22px; color: #e8e8ff; font-size: 14px;
}
.nav-item { display: flex; align-items: center; margin-right: 40px; white-space: nowrap; }
.nav-icon { width: 15px; height: 14px; margin-right: 7px; }
.nav-narrow .nav-icon { margin-right: 4px; }
.nav-right { margin-left: auto; display: flex; align-items: center; }
.nav-right .nav-item { margin-right: 0; }
.nav-icon-lg { width: 20px; height: 18px; margin-right: 8px; }
.nav-view { margin-left: 4px; }
.nav-view .nav-icon { width: 16px; height: 16px; margin-right: 8px; }
.nav-rule { height: 3px; background: #7ecac5; }

.content { padding: 22px 18px 0; }
.breadcrumb {
  height: 40px; background: #f4f4f4; display: flex; align-items: center; padding-left: 5px;
  white-space: nowrap;
}
.crumb-home { width: 21px; height: 15px; margin-right: 8px; }
.crumb-sep { width: 6px; height: 10px; margin: 0 7px 0 3px; }
.breadcrumb > span + .crumb-sep, .breadcrumb > a + .crumb-sep { margin: 0 10px 0 9px; }
.columns { display: flex; margin-top: 10px; align-items: flex-start; }
.side { width: 418px; flex: none; }
.main-col { margin-left: 52px; width: 1337px; flex: none; }

/* blocks */
.block { border: 1px solid #666; border-radius: 6px; margin-bottom: 21px; overflow: hidden; }
.block-head {
  height: 64px; background: #201ec8; border-bottom: 3px solid #555; color: #fff;
  display: flex; align-items: center; padding: 3px 30px 0 10px;
}
.head-icon { width: 20px; height: 17px; margin-right: 6px; }
.cal-head { width: 19px; height: 19px; margin-right: 6px; }
.clock-head { width: 18px; height: 18px; margin-right: 6px; }
.block-title { font-family: "DejaVu Serif Condensed", "DejaVu Serif", "Liberation Serif", serif; font-size: 16.500px; }
.block-ctrl { margin-left: auto; align-self: flex-start; display: flex; gap: 3px; margin-top: 11px; margin-right: -15px; }
.block-ctrl svg { width: 12px; height: 12px; }
.block-body { padding: 0 10.500px; }
.search-body { height: 85px; padding-top: 9px; }
.search-form { display: flex; justify-content: center; align-items: center; gap: 9px; }
.search-input { width: 155px; height: 30px; border: 1px solid #ccc; border-radius: 3px; background: #fff; }
.search-btn { width: 89px; height: 36px; background: #201ec8; color: #fff; border-radius: 4px; display: flex; align-items: center; justify-content: center; font-size: 14px; }
.search-adv { display: flex; align-items: center; justify-content: center; gap: 8px; margin-top: 11px; margin-right: 4px; }
.help-icon { width: 16px; height: 16px; }
.events-body { height: 91px; padding-top: 14px; }
.events-none { padding-left: 15px; margin-bottom: 21px; }
.recent-body { height: 88.500px; padding-top: 10px; line-height: 20px; }
.centered { text-align: center; }
.cal-body { padding-top: 9px; height: 400px; }
.cal-title { width: 280px; margin: 0 auto; display: flex; justify-content: space-between; align-items: center; height: 21px; }
.cal-arrow { width: 12px; height: 8px; margin-top: 3px; }
.cal-grid { width: 280px; margin: 0 auto; display: grid; grid-template-columns: repeat(7, 40px); grid-auto-rows: 20px; font-size: 12px; text-align: center; line-height: 20px; color: #444; }
.dow { background: #201ec8; color: #333; border-radius: 8px 8px 0 0; font-size: 13px; }
.we { color: #aaa; }
.legend { list-style: none; margin-top: 27px; }
.legend li { display: flex; align-items: center; height: 22.500px; }
.swatch { width: 33px; height: 19px; display: flex; align-items: center; justify-content: center; margin-right: 4px; }
.swatch svg { width: 18px; height: 12px; margin-right: 3px; }
.sw-global { background: #d6f8cd; }
.sw-cat { background: #d8bfd8; }
.sw-course { background: #ffd3bd; }
.sw-group { background: #fee7ae; }
.legend-icon { width: 16px; height: 16px; margin-right: 4px; }

/* main */
.intro-box {
  margin-top: 1px; height: 164px; border: 1px solid #201ec8; border-radius: 6px;
  padding: 25px 0 0 27px;
}
.intro-title { font-size: 18.700px; line-height: 26px; padding-left: 8px; margin-bottom: 22px; font-weight: 500; color: #2b2b2b; }
.res { display: flex; align-items: center; height: 42.860px; padding-bottom: 2px; color: #201ec8; white-space: nowrap; }
.res-icon { width: 24px; height: 24px; margin-right: 6px; margin-bottom: -2px; }
.unit { margin-top: 14px; }
.unit-head {
  height: 41px; background: #3836e0; color: #fff; border-radius: 6px 6px 0 0; padding-top: 6px;
  display: flex; align-items: center; justify-content: center;
  font-family: "DejaVu Serif Condensed", "DejaVu Serif", "Liberation Serif", serif; font-size: 20.300px;
}
.unit-body { border: 1px solid #201ec8; border-top: 0; padding: 37px 0 0 27px; height: 800px; }
.unit-sub { height: 52px; line-height: 46px; color: #f00; padding-left: 24px; font-family: "DejaVu Serif Condensed", "DejaVu Serif", "Liberation Serif", serif; font-size: 21px; }

.scroll-thumb { position: absolute; right: 0; top: 38px; width: 3px; height: 251px; background: #777; }
.to-top { position: absolute; left: 1811px; top: 824px; width: 34px; height: 32px; border-radius: 5px; background: rgba(160,160,160,.7); display: flex; align-items: center; justify-content: center; }
.to-top svg { width: 11px; height: 7px; }
```
